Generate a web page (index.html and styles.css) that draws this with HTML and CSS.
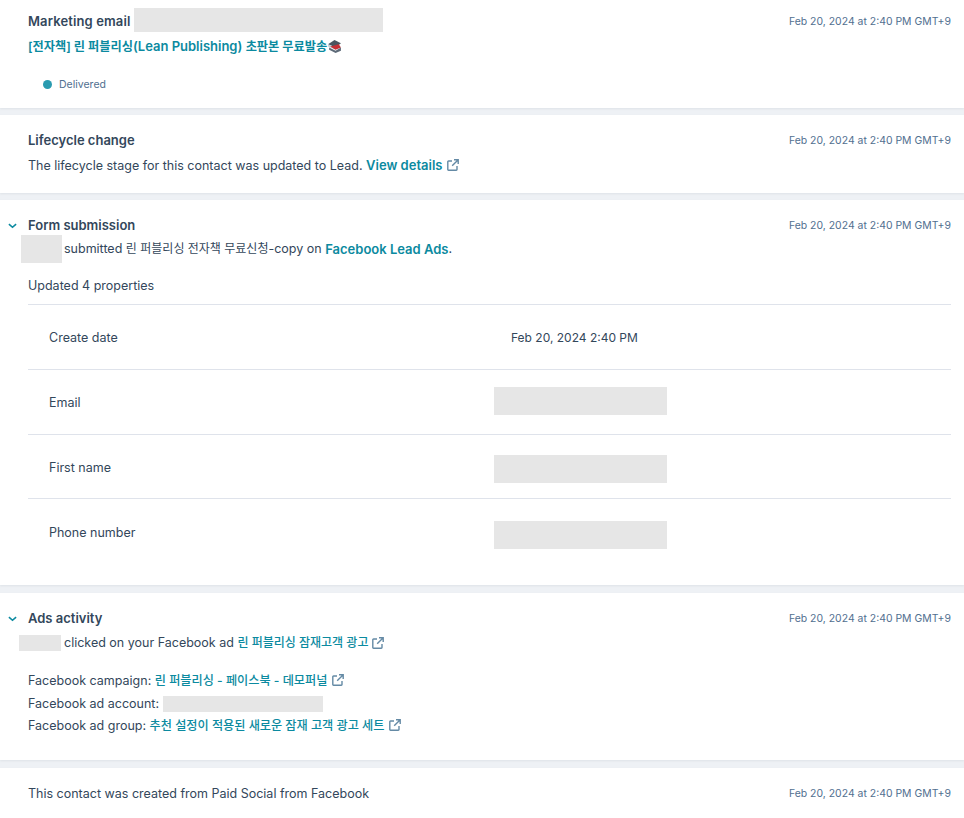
FILE: index.html
```html
<!DOCTYPE html>
<html lang="en">
  <head>
    <meta charset="UTF-8" />
    <title>Contact activity</title>
    <meta name="viewport" content="width=device-width, initial-scale=1.0" />
    <link rel="stylesheet" href="styles.css">
  </head>
  <body>
    <svg class="defs" width="0" height="0">
      <symbol id="ext" viewBox="0 0 12 12">
        <path d="M5 2H1.5a.7.7 0 0 0-.7.7v7.8a.7.7 0 0 0 .7.7h7.8a.7.7 0 0 0 .7-.7V7" fill="none" stroke="currentColor" stroke-width="1.4"/>
        <path d="M7 .8h4.2V5M11 1 5.2 6.8" fill="none" stroke="currentColor" stroke-width="1.4"/>
      </symbol>
    </svg>

    <div class="card card-email">
      <div class="head">
        <div class="title"><span class="title-text">Marketing email</span><span class="redact redact-subject"></span></div>
        <div class="date date-email">Feb 20, 2024 at 2:40 PM GMT+9</div>
      </div>
      <p class="subject">
        <a href="#"><span class="ko">[전자책] 린 퍼블리싱</span>(Lean Publishing) <span class="ko">초판본 무료발송</span></a><svg class="books" viewBox="0 0 14 14" width="15" height="15">
          <path d="M1 5 7 1l6 3-5 4z" fill="#4a5560"/>
          <path d="M1 5l7 3v2L1 7z" fill="#c9ccd0"/>
          <path d="M3 7l8-2 2 3-5 2z" fill="#c62f35"/>
          <path d="M2 8l6 3 5-3v3l-5 2-6-3z" fill="#5d6a78"/>
        </svg>
      </p>
      <div class="status"><span class="dot"></span>Delivered</div>
    </div>

    <div class="card card-lifecycle">
      <div class="head">
        <div class="title">Lifecycle change</div>
        <div class="date">Feb 20, 2024 at 2:40 PM GMT+9</div>
      </div>
      <p class="line">The lifecycle stage for this contact was updated to Lead. <a href="#" class="strong">View details</a> <svg class="ext"><use href="#ext"/></svg></p>
    </div>

    <div class="card card-form">
      <div class="head">
        <div class="title"><svg class="caret" viewBox="0 0 10 6"><path d="M1 1l4 3.4L9 1" fill="none" stroke="currentColor" stroke-width="1.8"/></svg>Form submission</div>
        <div class="date">Feb 20, 2024 at 2:40 PM GMT+9</div>
      </div>
      <p class="line line-who"><span class="redact redact-name"></span>submitted <span class="ko">린 퍼블리싱 전자책 무료신청</span>-copy on <a href="#" class="strong">Facebook Lead Ads</a>.</p>
      <p class="updated">Updated 4 properties</p>
      <div class="props">
        <div class="prop"><span class="prop-name">Create date</span><span class="prop-value">Feb 20, 2024 2:40 PM</span></div>
        <div class="prop"><span class="prop-name">Email</span><span class="redact redact-value redact-email"></span></div>
        <div class="prop prop-short"><span class="prop-name">First name</span><span class="redact redact-value redact-first"></span></div>
        <div class="prop prop-last"><span class="prop-name">Phone number</span><span class="redact redact-value redact-phone"></span></div>
      </div>
    </div>

    <div class="card card-ads">
      <div class="head">
        <div class="title"><svg class="caret" viewBox="0 0 10 6"><path d="M1 1l4 3.4L9 1" fill="none" stroke="currentColor" stroke-width="1.8"/></svg>Ads activity</div>
        <div class="date">Feb 20, 2024 at 2:40 PM GMT+9</div>
      </div>
      <p class="line line-clicked"><span class="redact redact-short"></span>clicked on your Facebook ad <a href="#" class="ko">린 퍼블리싱 잠재고객 광고</a><svg class="ext"><use href="#ext"/></svg></p>
      <div class="details">
        <p>Facebook campaign: <a href="#" class="ko">린 퍼블리싱 - 페이스북 - 데모퍼널</a> <svg class="ext"><use href="#ext"/></svg></p>
        <p>Facebook ad account: <span class="redact redact-account"></span></p>
        <p>Facebook ad group: <a href="#" class="ko">추천 설정이 적용된 새로운 잠재 고객 광고 세트</a> <svg class="ext"><use href="#ext"/></svg></p>
      </div>
    </div>

    <div class="card card-created">
      <div class="head">
        <div class="plain">This contact was created from Paid Social from Facebook</div>
        <div class="date">Feb 20, 2024 at 2:40 PM GMT+9</div>
      </div>
    </div>
  </body>
</html>
```
FILE: styles.css
```css
body {
  font-family: Inter, "Noto Sans CJK KR", sans-serif;
  font-size: 12.5px;
  color: #33475b;
  background-color: #eef1f5;
  margin: 0;
  height: 818px;
  overflow: hidden;
}

.defs {
  display: block;
  height: 0;
}

p {
  margin: 0;
}

a {
  color: #0b8aa0;
  text-decoration: none;
}

a.strong,
.subject a {
  font-size: 13px;
  font-weight: 600;
}

.ko {
  font-size: 12px;
  font-weight: 500;
}

.subject .ko {
  font-size: 12.2px;
  font-weight: 600;
}

.line-who .ko {
  font-weight: 400;
}

.details .ko {
  font-size: 12.15px;
}

.card {
  background: white;
  padding: 0 13px 0 28px;
  margin-bottom: 7px;
  box-shadow: 0 1px 2px rgba(45, 62, 80, 0.08);
}

.card-email {
  height: 108px;
  padding-top: 8px;
  box-sizing: border-box;
}

.card-lifecycle {
  height: 78px;
  padding-top: 14px;
  box-sizing: border-box;
}

.card-form {
  height: 385px;
  margin-bottom: 8px;
  padding-top: 14px;
  box-sizing: border-box;
}

.card-ads {
  height: 167px;
  margin-bottom: 8px;
  padding-top: 14px;
  box-sizing: border-box;
}

.card-created {
  padding-top: 14px;
  height: 50px;
  box-sizing: border-box;
}

.head {
  display: flex;
  align-items: center;
  justify-content: space-between;
  min-height: 22px;
}

.card-email .head {
  min-height: 24px;
}

.title {
  position: relative;
  display: flex;
  align-items: center;
  font-size: 13px;
  font-weight: 600;
}

.title-text {
  padding-top: 2px;
  letter-spacing: 0.12px;
}

.date {
  font-size: 10.45px;
  color: #516f90;
}

.date-email {
  padding-top: 2px;
}

.caret {
  position: absolute;
  left: -20px;
  top: 6px;
  width: 9px;
  height: 6px;
  color: #0b8aa0;
}

.redact {
  display: inline-block;
  background: #e6e6e6;
}

.redact-subject {
  width: 249px;
  height: 24px;
  margin-left: 4px;
}

.redact-name {
  width: 41px;
  height: 28px;
  margin: 0 2px 0 -7px;
}

.redact-short {
  width: 42px;
  height: 16px;
  margin: 0 3px 0 -9px;
}

.redact-value {
  width: 173px;
  height: 28px;
}

.redact-email {
  margin-bottom: 2px;
}

.redact-first {
  margin-top: 4px;
}

.redact-phone {
  margin-top: 5px;
}

.redact-account {
  width: 160px;
  height: 16px;
  vertical-align: middle;
}

.subject {
  display: flex;
  align-items: center;
  margin-top: 4px;
  height: 20px;
}

.books {
  flex: none;
}

.status {
  display: flex;
  align-items: center;
  margin: 22px 0 0 15px;
  font-size: 10.5px;
  color: #516f90;
}

.dot {
  width: 9px;
  height: 9px;
  border-radius: 50%;
  background: #2a9bb0;
  margin-right: 7px;
}

.line {
  margin-top: 4px;
  line-height: 20px;
}

.ext {
  width: 12px;
  height: 12px;
  margin-left: 1px;
  vertical-align: -1px;
  color: #648aa5;
}

.line-who {
  display: flex;
  align-items: center;
  white-space: pre;
  height: 28px;
  margin-top: -1px;
}

.line-clicked {
  display: flex;
  align-items: center;
  white-space: pre;
  height: 16px;
  margin-top: 6px;
}

.line-clicked .ext {
  margin-left: 4px;
}

.updated {
  margin-top: 13px;
  line-height: 20px;
}

.props {
  margin-top: 8px;
}

.prop {
  display: grid;
  grid-template-columns: 466px 1fr;
  align-items: center;
  height: 65px;
  border-top: 1px solid #dfe3eb;
  box-sizing: border-box;
}

.prop-short {
  height: 64px;
}

.prop-short .prop-name {
  margin-top: 2px;
}

.prop-last {
  padding-top: 2px;
}

.prop-name {
  padding-left: 21px;
}

.prop-value {
  padding-left: 17px;
  font-size: 12px;
}

.details {
  margin-top: 19px;
  line-height: 22.5px;
}
```
